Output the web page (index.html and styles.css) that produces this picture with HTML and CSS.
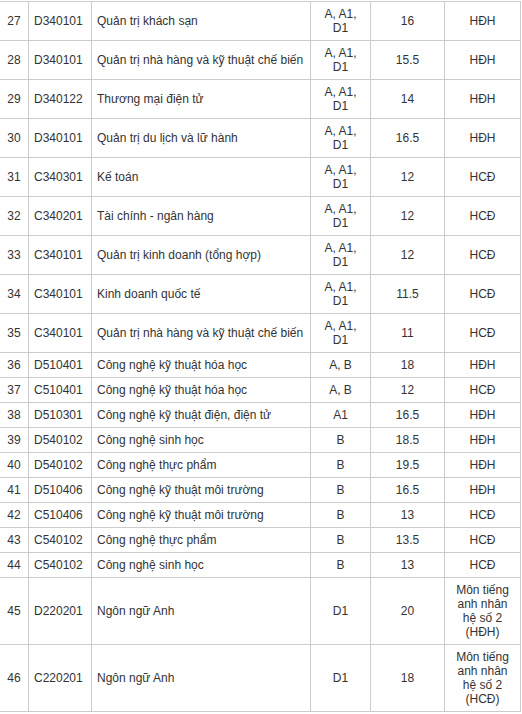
FILE: index.html
```html
<!DOCTYPE html>
<html lang="vi">
<head>
<meta charset="utf-8">
<title>Chỉ tiêu tuyển sinh</title>
<link rel="stylesheet" href="styles.css">
</head>
<body>
<table class="grid">
  <colgroup>
    <col class="c-no"><col class="c-code"><col class="c-name"><col class="c-block"><col class="c-score"><col class="c-note">
  </colgroup>
  <tbody>
    <tr><td class="no">27</td><td>D340101</td><td>Quản trị khách sạn</td><td class="mid">A, A1, D1</td><td class="mid">16</td><td class="mid">HĐH</td></tr>
    <tr><td class="no">28</td><td>D340101</td><td>Quản trị nhà hàng và kỹ thuật chế biến</td><td class="mid">A, A1, D1</td><td class="mid">15.5</td><td class="mid">HĐH</td></tr>
    <tr><td class="no">29</td><td>D340122</td><td>Thương mại điện tử</td><td class="mid">A, A1, D1</td><td class="mid">14</td><td class="mid">HĐH</td></tr>
    <tr><td class="no">30</td><td>D340101</td><td>Quản trị du lịch và lữ hành</td><td class="mid">A, A1, D1</td><td class="mid">16.5</td><td class="mid">HĐH</td></tr>
    <tr><td class="no">31</td><td>C340301</td><td>Kế toán</td><td class="mid">A, A1, D1</td><td class="mid">12</td><td class="mid">HCĐ</td></tr>
    <tr><td class="no">32</td><td>C340201</td><td>Tài chính - ngân hàng</td><td class="mid">A, A1, D1</td><td class="mid">12</td><td class="mid">HCĐ</td></tr>
    <tr><td class="no">33</td><td>C340101</td><td>Quản trị kinh doanh (tổng hợp)</td><td class="mid">A, A1, D1</td><td class="mid">12</td><td class="mid">HCĐ</td></tr>
    <tr><td class="no">34</td><td>C340101</td><td>Kinh doanh quốc tế</td><td class="mid">A, A1, D1</td><td class="mid">11.5</td><td class="mid">HCĐ</td></tr>
    <tr><td class="no">35</td><td>C340101</td><td>Quản trị nhà hàng và kỹ thuật chế biến</td><td class="mid">A, A1, D1</td><td class="mid">11</td><td class="mid">HCĐ</td></tr>
    <tr><td class="no">36</td><td>D510401</td><td>Công nghệ kỹ thuật hóa học</td><td class="mid">A, B</td><td class="mid">18</td><td class="mid">HĐH</td></tr>
    <tr><td class="no">37</td><td>C510401</td><td>Công nghệ kỹ thuật hóa học</td><td class="mid">A, B</td><td class="mid">12</td><td class="mid">HCĐ</td></tr>
    <tr><td class="no">38</td><td>D510301</td><td>Công nghệ kỹ thuật điện, điện tử</td><td class="mid">A1</td><td class="mid">16.5</td><td class="mid">HĐH</td></tr>
    <tr><td class="no">39</td><td>D540102</td><td>Công nghệ sinh học</td><td class="mid">B</td><td class="mid">18.5</td><td class="mid">HĐH</td></tr>
    <tr><td class="no">40</td><td>D540102</td><td>Công nghệ thực phẩm</td><td class="mid">B</td><td class="mid">19.5</td><td class="mid">HĐH</td></tr>
    <tr><td class="no">41</td><td>D510406</td><td>Công nghệ kỹ thuật môi trường</td><td class="mid">B</td><td class="mid">16.5</td><td class="mid">HĐH</td></tr>
    <tr><td class="no">42</td><td>C510406</td><td>Công nghệ kỹ thuật môi trường</td><td class="mid">B</td><td class="mid">13</td><td class="mid">HCĐ</td></tr>
    <tr><td class="no">43</td><td>C540102</td><td>Công nghệ thực phẩm</td><td class="mid">B</td><td class="mid">13.5</td><td class="mid">HCĐ</td></tr>
    <tr><td class="no">44</td><td>C540102</td><td>Công nghệ sinh học</td><td class="mid">B</td><td class="mid">13</td><td class="mid">HCĐ</td></tr>
    <tr><td class="no">45</td><td>D220201</td><td>Ngôn ngữ Anh</td><td class="mid">D1</td><td class="mid">20</td><td class="mid">Môn tiếng anh nhân hệ số 2 (HĐH)</td></tr>
    <tr><td class="no">46</td><td>C220201</td><td>Ngôn ngữ Anh</td><td class="mid">D1</td><td class="mid">18</td><td class="mid">Môn tiếng anh nhân hệ số 2 (HCĐ)</td></tr>
  </tbody>
</table>
</body>
</html>
```

FILE: styles.css
```css
html, body {
  margin: 0;
  padding: 0;
  background: #ffffff;
}

body {
  padding-top: 1px;
  font-family: "Liberation Sans", Arial, sans-serif;
  font-size: 12px;
  line-height: 14px;
  color: #333333;
}

.grid {
  border-collapse: collapse;
  table-layout: fixed;
  width: 521px;
  margin-left: -1px;
}

.c-no { width: 29px; }
.c-code { width: 63px; }
.c-name { width: 219px; }
.c-block { width: 60px; }
.c-score { width: 74px; }
.c-note { width: 76px; }

.grid td {
  border: 1px solid #cccccc;
  padding: 5px;
  vertical-align: middle;
  text-align: left;
}

.grid td.no,
.grid td.mid {
  text-align: center;
}
```
